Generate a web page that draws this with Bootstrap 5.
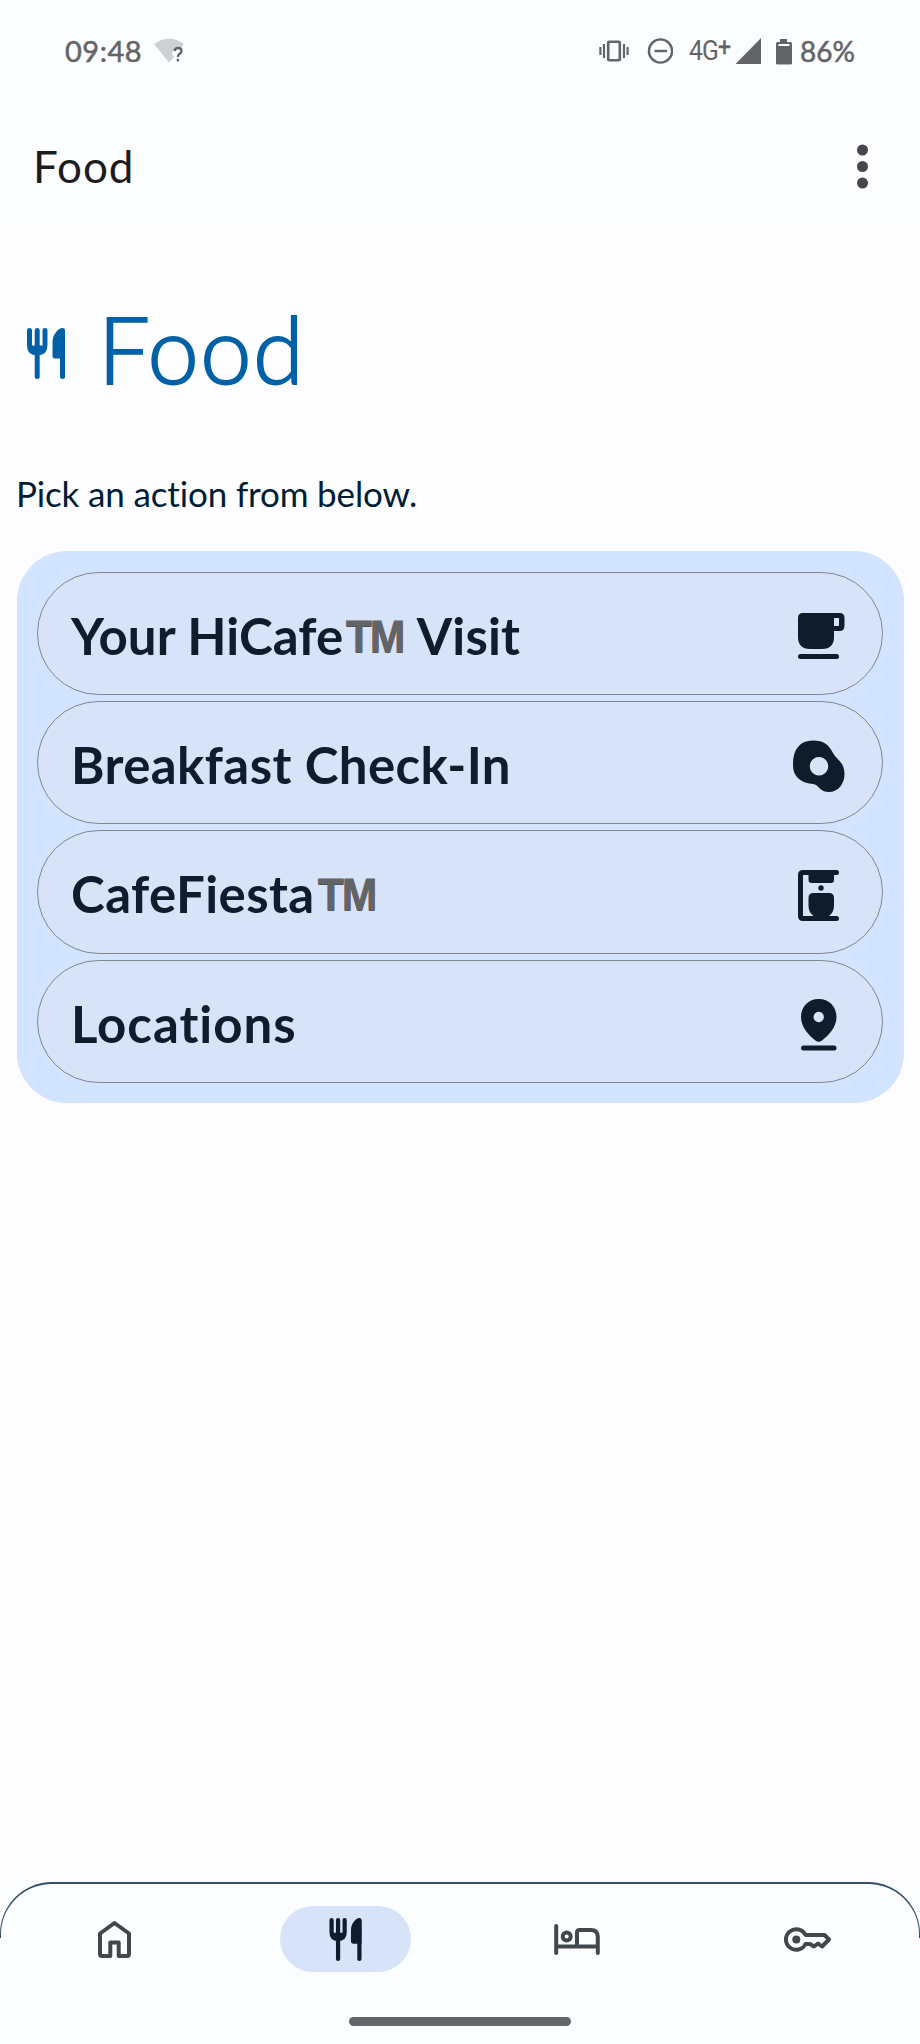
<!DOCTYPE html>
<html lang="en">
<head>
<meta charset="utf-8">
<meta name="viewport" content="width=device-width, initial-scale=1">
<title>Food</title>
<link href="https://cdn.jsdelivr.net/npm/bootstrap@5.3.0/dist/css/bootstrap.min.css" rel="stylesheet">
<style>
  body { background: #fdfcff; font-family: Lato, "Liberation Sans", sans-serif; color: #101c2b; font-variant-ligatures: none; }
  svg { display: block; flex: none; }
  .screen { height: 2044px; }
  .top-area { background: #fbfdff; height: 230px; }
  .status-bar { height: 102px; padding: 0 65px 0 65px; color: #636466; font-size: 28px; line-height: 36px; }
  .clock { font-size: 29px; letter-spacing: .5px; width: 89px; -webkit-text-stroke: .5px #636466; }
  .charge { -webkit-text-stroke: .5px #636466; }
  .network { font-family: Roboto, sans-serif; font-size: 28px; letter-spacing: -.9px; width: 46px; transform: scaleX(.88); transform-origin: left; }
  .network sup { font-size: 26px; top: -.15em; line-height: 0; -webkit-text-stroke: .5px #636466; }
  .app-bar { height: 128px; padding: 0 51px 0 33px; color: #1d1b1e; }
  .app-title { font-size: 44px; line-height: 56px; letter-spacing: 1px; }
  .page-title { color: #0061a6; height: 122px; margin-top: 62px; padding-left: 27px; }
  .page-title h1 { font-size: 92px; line-height: 122px; font-weight: 300; margin: -9px 0 0 33px; letter-spacing: 1.4px; -webkit-text-stroke: 1.8px #0061a6; }
  .hint { color: #001d36; font-size: 35px; line-height: 44px; margin: 56.5px 0 0 16px; letter-spacing: -.14px; }
  .actions { background: #d2e4ff; border-radius: 50px; margin: 36.500px 16.500px 0; padding: 20.500px 20.500px 20px; gap: 6.2px; height: 552px; }
  .action { background: #d7e3f9; border: 1px solid #82868e; border-radius: 62px; flex: 1 1 0; padding: 5px 33px 0 33px; color: #101c2b; text-decoration: none; font-size: 51px; font-weight: 700; line-height: 60px; }
  .action svg { margin-top: 2px; }
  .a1 { letter-spacing: .1px; }
  .a2 { letter-spacing: .4px; }
  .a3 { letter-spacing: .4px; }
  .a4 { letter-spacing: .95px; }
  .trade { display: inline-block; font-family: "Liberation Sans", sans-serif; font-size: 45px; letter-spacing: -2px; color: #636466; margin: 0 -1px 0 3px; line-height: 40px; text-shadow: 0 1px #45494c; -webkit-text-stroke: .8px #636466; transform: translateY(-3px) scaleX(.94); transform-origin: left; }
  .tabs { background: #fbfdff; height: 162px; }
  .tabs::before { content: ""; position: absolute; inset: 0 0 auto 0; height: 56px; border: 2px solid #364f69; border-width: 2px 1px 0; border-radius: 52px 52px 0 0; }
  .tabs a { height: 114px; color: #41484d; }
  .tab-pill { width: 131px; height: 66px; border-radius: 33px; }
  .tab-pill.current { background: #d7e3f9; color: #101c2b; }
  .handle { width: 222px; height: 9px; border-radius: 5px; background: #656668; margin: 21px auto 0; }
</style>
</head>
<body>
<svg class="d-none">
  <symbol id="cutlery" viewBox="0 0 38 51">
    <path fill="none" stroke="currentColor" stroke-width="5" stroke-linecap="round" stroke-linejoin="round" d="M2.500 2.500V17q0 8 7.700 8t7.800-8V2.500M10.200 2.500V48.500M35.500 4V48.500"/>
    <path fill="currentColor" d="M2 17.500h16.500q-1 8-8.300 8T2 17.500zM35.500 0Q38 0 38 2.500V30.500H28Q25.500 30.500 25.500 28V14C25.500 7 31 0 35.500 0z"/>
  </symbol>
</svg>
<div class="screen d-flex flex-column">
  <div class="top-area">
    <div class="status-bar d-flex align-items-center">
      <span class="clock">09:48</span>
      <svg width="32" height="28" viewBox="0 0 32 28"><path fill="#cfd0d2" d="M0 7Q15-3.500 30 7l-3 4q-8-1-9 6l2 3-5 5.500z"/><path fill="none" stroke="#636466" stroke-width="2.300" d="M20.500 14q.5-3 3.600-3 3.400 0 3.400 3 0 1.500-1.800 2.800t-1.800 3.200M23.900 21.800v2.700"/></svg>
      <div class="d-flex align-items-center ms-auto">
        <svg width="30" height="22" viewBox="0 0 30 22"><path fill="none" stroke="currentColor" stroke-width="2.200" d="M1.400 7v8M5 4v14M25 4v14M28.600 7v8"/><rect x="9.200" y="1.700" width="11.600" height="18.600" rx="1" fill="none" stroke="currentColor" stroke-width="2.600"/></svg>
        <svg class="ms-3" width="28" height="26" viewBox="-2.500 0 28 26" fill="none" stroke="currentColor" stroke-width="2.400"><circle cx="13" cy="13" r="11.600"/><path d="M7 13h12.500" stroke-width="2.400"/></svg>
        <span class="network ms-3">4G<sup>+</sup></span>
        <svg width="26" height="26" viewBox="0 0 26 26"><path fill="currentColor" d="M.5 26 26 0v26z"/></svg>
        <svg class="battery" width="39" height="27" viewBox="0 0 39 27"><path fill="currentColor" d="M19 1h7v3h3.500q1.500 0 1.500 1.500V25q0 1.500-1.500 1.500h-13Q15 26.500 15 25V5.500Q15 4 16.500 4H19z"/><path fill="#fbfdff" d="M17.500 6h11v2h-11z"/></svg>
        <span class="charge">86%</span>
      </div>
    </div>
    <header class="app-bar d-flex align-items-center justify-content-between">
      <span class="app-title">Food</span>
      <svg width="13" height="45" viewBox="0 0 13 45" fill="#49454e"><circle cx="6.500" cy="6" r="5.500"/><circle cx="6.500" cy="22.500" r="5.500"/><circle cx="6.500" cy="39" r="5.500"/></svg>
    </header>
  </div>
  <main class="flex-grow-1">
    <div class="page-title d-flex align-items-center">
      <svg width="38" height="51"><use href="#cutlery"/></svg>
      <h1>Food</h1>
    </div>
    <p class="hint">Pick an action from below.</p>
    <div class="actions d-flex flex-column">
      <a href="#" class="action d-flex align-items-center justify-content-between"><span class="a1">Your HiCafe<span class="trade">TM</span> Visit</span>
        <svg width="61" height="61" viewBox="0 0 61 61" fill="currentColor"><path fill-rule="evenodd" d="M15 7H51.500Q56.500 7 56.500 12V19.500Q56.500 25 51.500 25H46V31Q46 43 34 43H22Q10 43 10 31V12Q10 7 15 7zM46 12v8h5v-8z"/><rect x="10" y="48" width="41" height="5" rx="2.500"/></svg></a>
      <a href="#" class="action d-flex align-items-center justify-content-between"><span class="a2">Breakfast Check-In</span>
        <svg width="61" height="61" viewBox="0 0 61 61" fill="currentColor"><path fill-rule="evenodd" d="M5 28C5 13 12 4.500 25 4.500 36 4.500 41 9 45 17 48 23 56.500 26 56.500 38 56.500 48 50 56 41 56 32 56 31 50 27 48.500 22 47 17 48 11 43 6.500 39 5 35 5 28zM31 21a9.200 9.200 0 1 0 .01 0z"/></svg></a>
      <a href="#" class="action d-flex align-items-center justify-content-between"><span class="a3">CafeFiesta<span class="trade">TM</span></span>
        <svg width="61" height="61" viewBox="0 0 61 61" fill="currentColor"><path d="M15 5H48.500a2.500 2.500 0 0 1 0 5H46v5q0 3-3 3H23.500q-3 0-3-3v-5H15v41h10.500q-5-4-5-10V33q0-5 5-5H41q5 0 5 5v8q0 6-5 10h7.500a2.500 2.500 0 0 1 0 5H15q-5 0-5-5V10q0-5 5-5z"/><circle cx="33" cy="23" r="2.700"/></svg></a>
      <a href="#" class="action d-flex align-items-center justify-content-between"><span class="a4">Locations</span>
        <svg width="61" height="61" viewBox="0 0 61 61" fill="currentColor"><path fill-rule="evenodd" d="M30.700 5C41 5 48.500 12.500 48.500 23 48.500 33 41 41 34 46.500q-3.300 2.500-6.600 0C20.500 41 13 33 13 23 13 12.500 20.500 5 30.700 5zm0 12.800a5.200 5.200 0 1 0 .01 0z"/><rect x="13" y="51.500" width="35.500" height="5" rx="2.500"/></svg></a>
    </div>
  </main>
  <nav class="tabs position-relative">
    <div class="row g-0">
      <a href="#" class="col d-flex align-items-center justify-content-center" aria-label="Home"><span class="tab-pill d-flex align-items-center justify-content-center"><svg width="34" height="37" viewBox="0 0 34 37"><path fill="none" stroke="currentColor" stroke-width="4" stroke-linejoin="round" d="M2 12.500 16.500 2 31 12.500V33q0 2-2 2H20.700V21.500H12.300V35H4q-2 0-2-2z"/></svg></span></a>
      <a href="#" class="col d-flex align-items-center justify-content-center" aria-label="Food"><span class="tab-pill current d-flex align-items-center justify-content-center"><svg width="33" height="43" preserveAspectRatio="none"><use href="#cutlery"/></svg></span></a>
      <a href="#" class="col d-flex align-items-center justify-content-center" aria-label="Room"><span class="tab-pill d-flex align-items-center justify-content-center ps-1"><svg width="46" height="31" viewBox="0 0 46 31" fill="none" stroke="currentColor" stroke-width="4" stroke-linecap="round"><path d="M2.200 2V29M43.800 29V13q0-7-7-7H25.500Q23 6 23 8.500V22M2.200 22.500H43.800"/><circle cx="12.700" cy="12.500" r="4"/></svg></span></a>
      <a href="#" class="col d-flex align-items-center justify-content-center" aria-label="Key"><span class="tab-pill d-flex align-items-center justify-content-center ps-1"><svg width="47" height="25" viewBox="0 0 47 25"><path fill="none" stroke="currentColor" stroke-width="4" stroke-linejoin="round" d="M21.500 8A10.300 10.300 0 1 0 21.500 17H26L30 19.500 34 16.500 38 19.500 45 12.500 40.500 8z"/><circle cx="12.300" cy="12.500" r="4" fill="currentColor"/></svg></span></a>
    </div>
    <div class="handle"></div>
  </nav>
</div>
<script src="https://cdn.jsdelivr.net/npm/bootstrap@5.3.0/dist/js/bootstrap.bundle.min.js"></script>
</body>
</html>
